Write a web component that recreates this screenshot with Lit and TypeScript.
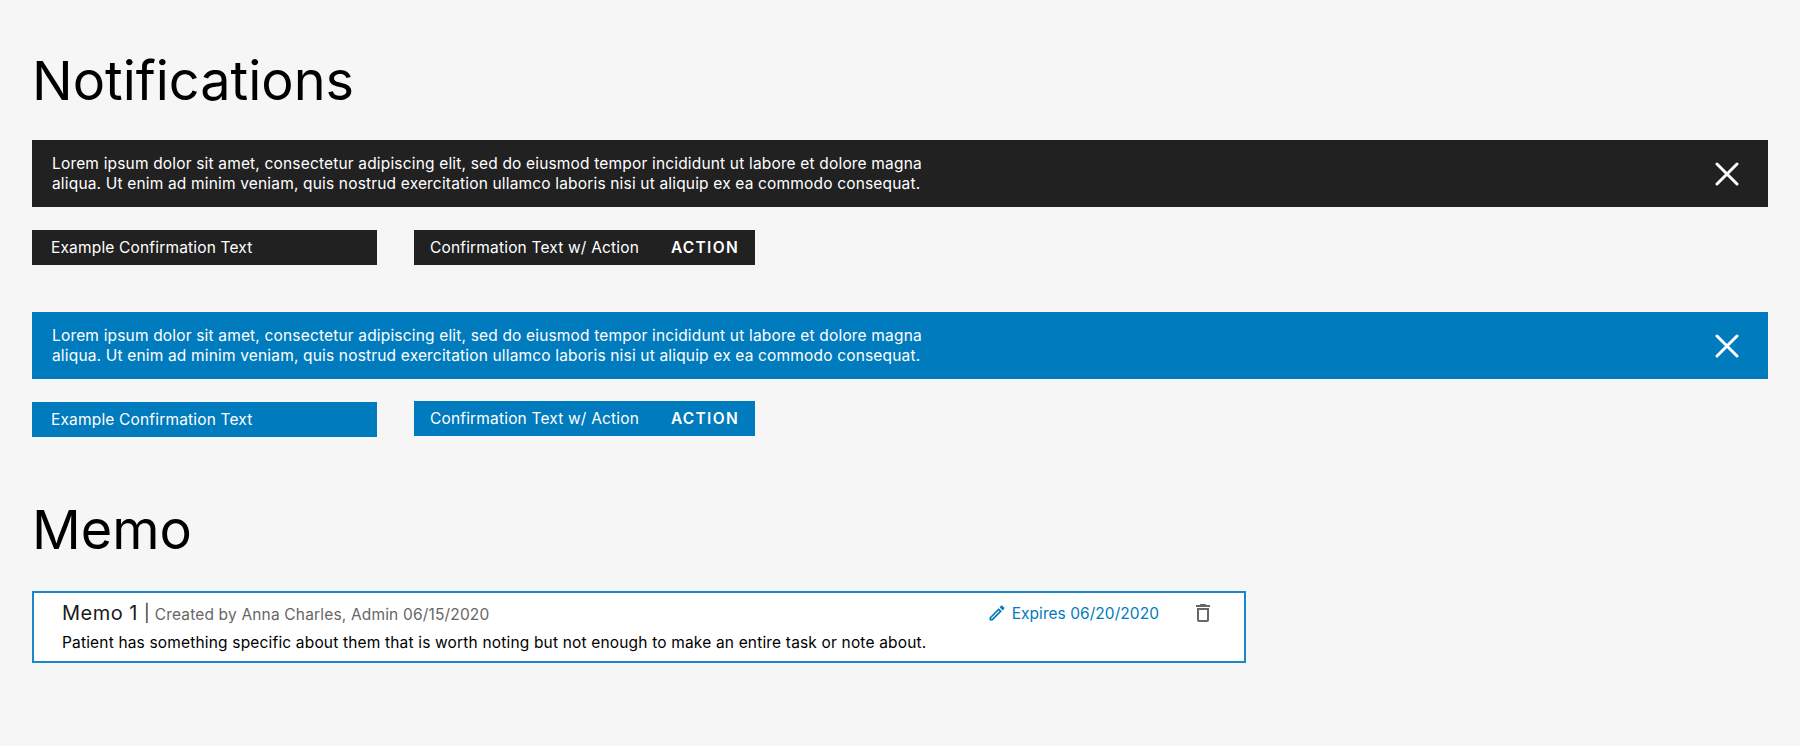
import { LitElement, html, css } from "lit";
import { customElement } from "lit/decorators.js";

const LOREM = html`Lorem ipsum dolor sit amet, consectetur adipiscing elit, sed do eiusmod tempor incididunt ut labore et dolore magna<br />aliqua. Ut enim ad minim veniam, quis nostrud exercitation ullamco laboris nisi ut aliquip ex ea commodo consequat.`;

@customElement("app-root")
export class AppRoot extends LitElement {
  static styles = css`
    :host { display: block; width: 1800px; height: 746px; background: #f6f6f6; font-family: "Inter", "Noto Sans", sans-serif; color: #000; overflow: hidden; }
    .page { padding: 47px 32px 0; display: flex; flex-direction: column; }
    h1 { margin: 0; font-size: 54px; line-height: 68px; font-weight: 400; }
    .memo-title { margin-top: 59px; }
    .group { display: flex; flex-direction: column; }
    .notif-first { margin-top: 25px; }
    .notif-second { margin-top: 47px; }
    .banner { height: 67px; display: flex; align-items: center; justify-content: space-between; padding: 0 29px 0 20px; color: #fff; font-size: 15.5px; letter-spacing: 0.17px; line-height: 20.5px; }
    .banner-text { padding-top: 1px; }
    .close { width: 24px; height: 24px; display: block; }
    .toasts { display: flex; margin-top: 23px; gap: 37px; align-items: center; }
    .toast { height: 35px; display: flex; align-items: center; color: #fff; font-size: 15.5px; letter-spacing: 0.17px; box-sizing: border-box; padding-bottom: 1px; }
    .t1 { width: 345px; padding-left: 19px; }
    .t2 { width: 341px; padding: 0 16px 1px; justify-content: space-between; }
    .action { font-weight: 600; letter-spacing: 1.3px; }
    .dark { background: #212121; }
    .blue { background: #007bbd; }
    .shift { position: relative; top: -1px; }
    .memo { margin-top: 27px; width: 1214px; height: 72px; box-sizing: border-box; border: 2px solid #1a88c8; background: #fff; padding: 5px 28px 0; display: flex; flex-direction: column; }
    .memo-top { display: flex; align-items: center; height: 30px; }
    .memo-name { font-size: 20px; letter-spacing: 0.5px; color: #1a1a1a; }
    .memo-meta { font-size: 15.5px; letter-spacing: 0.17px; color: #666; margin-left: 5px; position: relative; top: 1px; }
    .sep { font-size: 17px; color: #333; margin-left: 6px; }
    .expires { margin-left: auto; display: flex; align-items: center; gap: 5px; color: #007bbd; font-size: 15.5px; letter-spacing: 0.05px; }
    .pencil { width: 20px; height: 20px; display: block; }
    .trash { width: 24px; height: 24px; display: block; margin-left: 32px; margin-right: 1px; }
    .memo-body { font-size: 15.5px; letter-spacing: 0.17px; margin-top: 3px; line-height: 24px; }
  `;

  private banner(kind: string) {
    return html`<div class="banner ${kind}">
      <div class="banner-text">${LOREM}</div>
      <svg class="close" viewBox="0 0 24 24" fill="none" stroke="#fff" stroke-width="3" stroke-linecap="round"><path d="M2 2 L22 22 M22 2 L2 22" /></svg>
    </div>`;
  }

  private toasts(kind: string, shift: boolean) {
    return html`<div class="toasts">
      <div class="toast t1 ${kind}">Example Confirmation Text</div>
      <div class="toast t2 ${kind} ${shift ? "shift" : ""}"><span>Confirmation Text w/ Action</span><span class="action">ACTION</span></div>
    </div>`;
  }

  render() {
    return html`<div class="page">
      <h1>Notifications</h1>
      <div class="group notif-first">${this.banner("dark")}${this.toasts("dark", false)}</div>
      <div class="group notif-second">${this.banner("blue")}${this.toasts("blue", true)}</div>
      <h1 class="memo-title">Memo</h1>
      <div class="memo">
        <div class="memo-top">
          <span class="memo-name">Memo 1</span><span class="sep">|</span>
          <span class="memo-meta">Created by Anna Charles, Admin 06/15/2020</span>
          <span class="expires">
            <svg class="pencil" viewBox="0 0 24 24" fill="#007bbd"><path d="M3 17.25V21h3.75L17.81 9.94l-3.75-3.75L3 17.25zM5.92 19H5v-.92l9.06-9.06.92.92L5.92 19zM20.71 7.04a1 1 0 0 0 0-1.41l-2.34-2.34a1 1 0 0 0-1.41 0l-1.83 1.83 3.75 3.75 1.83-1.83z" /></svg>
            Expires 06/20/2020
          </span>
          <svg class="trash" viewBox="0 0 24 24" fill="#666"><path d="M6 19c0 1.1.9 2 2 2h8c1.1 0 2-.9 2-2V7H6v12zM8 9h8v10H8V9zm7.5-5-1-1h-5l-1 1H5v2h14V4h-3.5z" /></svg>
        </div>
        <div class="memo-body">Patient has something specific about them that is worth noting but not enough to make an entire task or note about.</div>
      </div>
    </div>`;
  }
}
